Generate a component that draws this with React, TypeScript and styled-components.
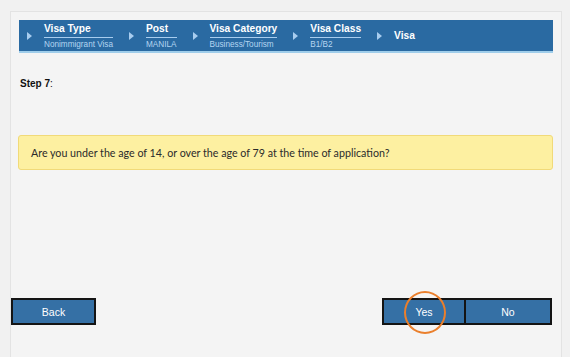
import React from "react";
import styled, { createGlobalStyle } from "styled-components";

const GlobalStyle = createGlobalStyle`
  html, body {
    margin: 0;
    padding: 0;
    background: #f1f1f1;
    font-family: "Liberation Sans", Arial, sans-serif;
  }
`;

const steps = [
  { title: "Visa Type", sub: "Nonimmigrant Visa" },
  { title: "Post", sub: "MANILA" },
  { title: "Visa Category", sub: "Business/Tourism" },
  { title: "Visa Class", sub: "B1/B2" },
  { title: "Visa" },
];

const App = () => {
  return (
    <>
      <GlobalStyle />
      <Panel>
        <Crumbs>
          {steps.map((s) => (
            <Crumb key={s.title}>
              <Arrow />
              <CrumbText $single={!s.sub}>
                <CrumbTitle $single={!s.sub}>{s.title}</CrumbTitle>
                {s.sub && <CrumbSub>{s.sub}</CrumbSub>}
              </CrumbText>
            </Crumb>
          ))}
        </Crumbs>

        <StepLabel>
          <b>Step 7</b>:
        </StepLabel>

        <Question>
          Are you under the age of 14, or over the age of 79 at the time of
          application?
        </Question>

        <Footer>
          <Button $width={85}>Back</Button>
          <ButtonGroup>
            <Button $width={84}>
              Yes
              <Highlight />
            </Button>
            <Button $width={86} $joined>
              No
            </Button>
          </ButtonGroup>
        </Footer>
      </Panel>
    </>
  );
};

const Panel = styled.div`
  margin: 11px 0 0 10px;
  width: 550px;
  min-height: 345px;
  background: #f4f4f4;
  border: 1px solid #e3e3e3;
  border-bottom: none;
  display: flex;
  flex-direction: column;
`;

const Crumbs = styled.div`
  margin: 8px 8px 0 8px;
  height: 31px;
  background: #2a6aa2;
  border-bottom: 2px solid #9fcdea;
  display: flex;
  align-items: center;
  padding-left: 8px;
  gap: 16px;
`;

const Crumb = styled.div`
  display: flex;
  align-items: center;
  gap: 12px;
`;

const Arrow = styled.span`
  width: 0;
  height: 0;
  border-top: 4px solid transparent;
  border-bottom: 4px solid transparent;
  border-left: 5px solid #a8cdef;
  margin-top: 1px;
`;

const CrumbText = styled.div<{ $single: boolean }>`
  display: flex;
  flex-direction: column;
  padding-top: ${(p) => (p.$single ? "0" : "2px")};
`;

const CrumbTitle = styled.div<{ $single: boolean }>`
  color: #ffffff;
  font-weight: bold;
  font-size: 10.2px;
  line-height: 12px;
  padding-bottom: ${(p) => (p.$single ? "0" : "2px")};
  border-bottom: ${(p) => (p.$single ? "none" : "1px solid #a8cdef")};
`;

const CrumbSub = styled.div`
  color: #b4d5f1;
  font-size: 8.2px;
  line-height: 11px;
  margin-top: 1px;
  white-space: nowrap;
`;

const StepLabel = styled.div`
  margin: 25px 0 0 9px;
  font-size: 10px;
  line-height: 12px;
  color: #111;
`;

const Question = styled.div`
  margin: 45px 8px 0 7px;
  height: 33px;
  background: #fdf0a1;
  border: 1px solid #f1da79;
  border-radius: 3px;
  display: flex;
  align-items: center;
  padding-left: 12px;
  font-family: Lato, "Liberation Sans", sans-serif;
  font-size: 10.7px;
  color: #2b2b2b;
`;

const Footer = styled.div`
  margin: 128px 9px 0 0;
  display: flex;
  justify-content: space-between;
  align-items: center;
`;

const ButtonGroup = styled.div`
  display: flex;
`;

const Button = styled.div<{ $width: number; $joined?: boolean }>`
  position: relative;
  box-sizing: border-box;
  width: ${(p) => p.$width}px;
  height: 27px;
  background: #3570a5;
  border: 2px solid #141414;
  border-left-width: ${(p) => (p.$joined ? "0" : "2px")};
  color: #ffffff;
  font-size: 10.5px;
  display: flex;
  align-items: center;
  justify-content: center;
`;

const Highlight = styled.span`
  position: absolute;
  left: 20px;
  top: -9px;
  width: 38px;
  height: 39px;
  border: 2.5px solid #ea7f2c;
  border-radius: 50%;
`;

export default App;
